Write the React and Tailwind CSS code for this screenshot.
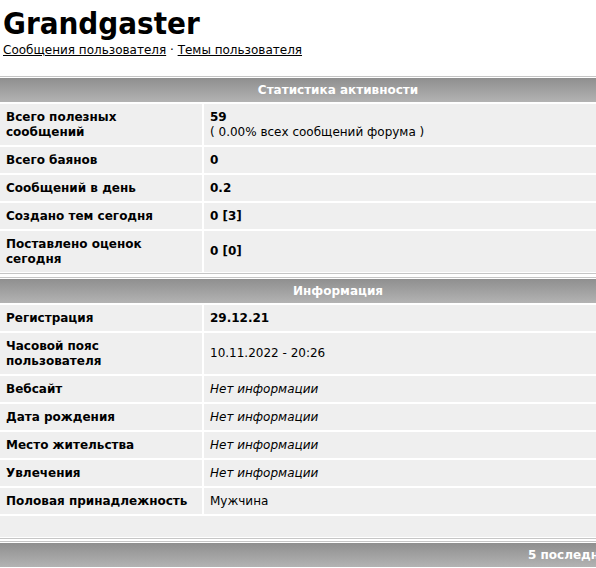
const stats = [
  { label: "Всего полезных сообщений", value: "59", sub: "( 0.00% всех сообщений форума )", bold: true },
  { label: "Всего баянов", value: "0", bold: true },
  { label: "Сообщений в день", value: "0.2", bold: true },
  { label: "Создано тем сегодня", value: "0 [3]", bold: true },
  { label: "Поставлено оценок сегодня", value: "0 [0]", bold: true },
];

const info = [
  { label: "Регистрация", value: "29.12.21", bold: true },
  { label: "Часовой пояс пользователя", value: "10.11.2022 - 20:26" },
  { label: "Вебсайт", value: "Нет информации", italic: true },
  { label: "Дата рождения", value: "Нет информации", italic: true },
  { label: "Место жительства", value: "Нет информации", italic: true },
  { label: "Увлечения", value: "Нет информации", italic: true },
  { label: "Половая принадлежность", value: "Мужчина" },
];

function Header({ children, className = "" }) {
  return (
    <div className="border-t border-[#c6c6c6] pt-px">
      <div
        className={`h-6 bg-gradient-to-b from-[#8f8f8f] to-[#b3b3b3] text-white font-bold text-[12px] leading-6 ${className}`}
      >
        {children}
      </div>
    </div>
  );
}

function Row({ row }) {
  return (
    <div className="flex gap-[2px]">
      <div className="w-[202px] shrink-0 bg-[#efefef] px-[6px] py-[5.5px] font-bold leading-[15px] flex items-center">
        {row.label}
      </div>
      <div
        className={`flex-1 bg-[#efefef] px-[6px] py-[5.5px] leading-[15px] flex flex-col justify-center ${
          row.bold ? "font-bold" : ""
        } ${row.italic ? "italic" : ""}`}
      >
        <span>{row.value}</span>
        {row.sub && <span className="font-normal">{row.sub}</span>}
      </div>
    </div>
  );
}

export default function App() {
  return (
    <div className="w-[596px] h-[568px] overflow-hidden bg-white text-black text-[12px] font-['DejaVu_Sans',Verdana,sans-serif]">
      <div className="w-[676px]">
        <div className="px-[3px] pt-[4px]">
          <h1 className="text-[31px] font-bold leading-[38px] font-['DejaVu_Sans_Condensed','DejaVu_Sans',sans-serif]">
            Grandgaster
          </h1>
          <div className="text-[12px] leading-[16px]">
            <a href="#" className="underline">Сообщения пользователя</a>
            {" · "}
            <a href="#" className="underline">Темы пользователя</a>
          </div>
        </div>

        <div className="mt-[18px] border-b border-[#c6c6c6] pb-[1px]">
          <Header className="text-center">Статистика активности</Header>
          <div className="flex flex-col gap-[2px] pt-[2px]">
            {stats.map((r) => (
              <Row key={r.label} row={r} />
            ))}
          </div>
        </div>

        <div className="mt-[3px] border-b border-[#c6c6c6] pb-[1px]">
          <Header className="text-center">Информация</Header>
          <div className="flex flex-col gap-[2px] pt-[2px]">
            {info.map((r) => (
              <Row key={r.label} row={r} />
            ))}
            <div className="h-[21px] bg-[#efefef]" />
          </div>
        </div>

        <div className="mt-[2px]">
          <Header className="pl-[528px] whitespace-nowrap">
            5 последних сообщений пользователя
          </Header>
        </div>
      </div>
    </div>
  );
}
